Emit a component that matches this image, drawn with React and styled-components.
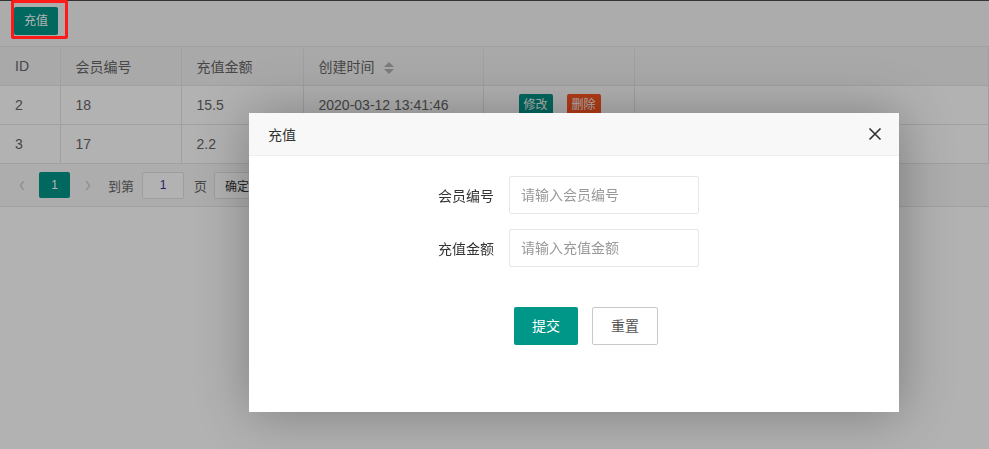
import React from 'react';
import styled, { createGlobalStyle } from 'styled-components';

const GlobalStyle = createGlobalStyle`
    html, body{
        margin: 0;
        padding: 0;
        background: #fff;
    }
    body{
        font-family: "Liberation Sans", "Noto Sans CJK SC", sans-serif;
        font-size: 14px;
        color: #666;
    }
`;

const Page = styled.div`
    width: 989px;
    min-height: 449px;
    border-top: 1px solid #4a4a4a;
    box-sizing: border-box;
`;

const Toolbar = styled.div`
    height: 46px;
    padding: 6px 14px 0;
    box-sizing: border-box;
    background: #f6f6f6;
    border-bottom: 1px solid #e6e6e6;
`;

const Btn = styled.button`
    height: ${p => p.h || 28}px;
    padding: 0 ${p => p.px || 10}px;
    border: ${p => p.plain ? '1px solid #c9c9c9' : 'none'};
    border-radius: 2px;
    background: ${p => p.plain ? '#fff' : p.danger ? '#ff5722' : '#009688'};
    color: ${p => p.plain ? '#555' : '#fff'};
    font-family: inherit;
    font-size: ${p => p.fs || 12}px;
    line-height: 1;
    cursor: pointer;
`;

const Table = styled.table`
    width: 100%;
    border-collapse: collapse;
    table-layout: fixed;
    th, td{
        height: 38px;
        padding: 0 15px;
        border-right: 1px solid #e6e6e6;
        border-bottom: 1px solid #e6e6e6;
        text-align: left;
        font-weight: normal;
        white-space: nowrap;
    }
    th{
        background: #f2f2f2;
    }
    td{
        background: #fff;
    }
`;

const SortIcon = styled.span`
    display: inline-flex;
    flex-direction: column;
    gap: 2px;
    margin-left: 9px;
    vertical-align: middle;
    i{
        width: 0;
        height: 0;
        border-left: 5px solid transparent;
        border-right: 5px solid transparent;
    }
    i:first-child{ border-bottom: 5px solid #b2b2b2; }
    i:last-child{ border-top: 5px solid #b2b2b2; }
`;

const Actions = styled.div`
    display: flex;
    gap: 14px;
    padding-left: 20px;
`;

const Pager = styled.div`
    display: flex;
    align-items: center;
    height: 42px;
    padding: 0 10px;
    background: #f8f8f8;
    border-bottom: 1px solid #e6e6e6;
    color: #666;
    font-size: 13px;
`;

const PageArrow = styled.span`
    width: 24px;
    text-align: center;
    color: #cfcfcf;
    font-size: 22px;
    line-height: 1;
    transform: scaleX(0.8);
`;

const PageNum = styled.span`
    display: inline-flex;
    align-items: center;
    justify-content: center;
    width: 31px;
    height: 26px;
    margin: 0 6px 0 5px;
    border-radius: 2px;
    background: #009688;
    color: #fff;
    font-size: 12px;
`;

const PageText = styled.span`
    margin-left: ${p => p.ml || 0}px;
`;

const PageInput = styled.span`
    display: inline-flex;
    align-items: center;
    justify-content: center;
    width: 40px;
    height: 25px;
    margin: 0 10px 0 8px;
    border: 1px solid #e2e2e2;
    border-radius: 2px;
    background: #fff;
    color: #333399;
    font-size: 12px;
`;

const PageGo = styled.span`
    display: inline-flex;
    align-items: center;
    height: 25px;
    padding: 0 10px;
    margin-left: 7px;
    border: 1px solid #e2e2e2;
    border-radius: 2px;
    background: #fff;
    color: #333;
    font-size: 12px;
`;

const Shade = styled.div`
    position: fixed;
    inset: 0;
    background: rgba(0, 0, 0, 0.3);
    z-index: 10;
`;

const Mark = styled.div`
    position: absolute;
    left: 11px;
    top: 0;
    width: 57px;
    height: 39px;
    border: 3px solid #ff1a1a;
    box-sizing: border-box;
    border-radius: 2px;
    z-index: 11;
`;

const Layer = styled.div`
    position: absolute;
    left: 249px;
    top: 113px;
    width: 650px;
    height: 299px;
    background: #fff;
    box-shadow: 1px 1px 50px rgba(0, 0, 0, 0.3);
    z-index: 12;
    color: #333;
`;

const LayerTitle = styled.div`
    display: flex;
    align-items: center;
    justify-content: space-between;
    height: 42px;
    padding: 0 17px 0 19px;
    background: #f8f8f8;
    border-bottom: 1px solid #eee;
    font-size: 14px;
`;

const CloseIcon = styled.svg`
    width: 14px;
    height: 14px;
    stroke: #2f2f2f;
    stroke-width: 1.6;
`;

const Form = styled.div`
    display: flex;
    flex-direction: column;
    gap: 15px;
    padding: 20px 0 0 0;
`;

const FormRow = styled.div`
    display: flex;
    align-items: center;
`;

const Label = styled.label`
    width: 260px;
    padding-right: 15px;
    box-sizing: border-box;
    text-align: right;
    color: #333;
    font-size: 14px;
`;

const Input = styled.input`
    width: 190px;
    height: 38px;
    padding: 0 11px;
    box-sizing: border-box;
    border: 1px solid #e6e6e6;
    border-radius: 2px;
    font-family: inherit;
    font-size: 14px;
    color: #333;
    outline: none;
    &::placeholder{
        color: #999;
    }
`;

const ButtonRow = styled.div`
    display: flex;
    gap: 14px;
    padding: 40px 0 0 265px;
`;

const rows = [
    { id: 2, member: 18, amount: '15.5', time: '2020-03-12 13:41:46' },
    { id: 3, member: 17, amount: '2.2', time: '2020-03-12 13:52:08' },
];

const App = () => {
    return (
        <>
            <GlobalStyle />
            <Page>
                <Toolbar>
                    <Btn>充值</Btn>
                </Toolbar>
                <Table>
                    <colgroup>
                        <col style={{ width: 60 }} />
                        <col style={{ width: 121 }} />
                        <col style={{ width: 122 }} />
                        <col style={{ width: 180 }} />
                        <col style={{ width: 151 }} />
                        <col />
                    </colgroup>
                    <thead>
                        <tr>
                            <th>ID</th>
                            <th>会员编号</th>
                            <th>充值金额</th>
                            <th>创建时间<SortIcon><i /><i /></SortIcon></th>
                            <th></th>
                            <th></th>
                        </tr>
                    </thead>
                    <tbody>
                        {rows.map(r => (
                            <tr key={r.id}>
                                <td>{r.id}</td>
                                <td>{r.member}</td>
                                <td>{r.amount}</td>
                                <td>{r.time}</td>
                                <td>
                                    <Actions>
                                        <Btn h={22} px={5}>修改</Btn>
                                        <Btn h={22} px={5} danger>删除</Btn>
                                    </Actions>
                                </td>
                                <td></td>
                            </tr>
                        ))}
                    </tbody>
                </Table>
                <Pager>
                    <PageArrow>‹</PageArrow>
                    <PageNum>1</PageNum>
                    <PageArrow>›</PageArrow>
                    <PageText ml={8}>到第</PageText>
                    <PageInput>1</PageInput>
                    <PageText>页</PageText>
                    <PageGo>确定</PageGo>
                    <PageText ml={10}>共 2 条</PageText>
                </Pager>
            </Page>
            <Shade />
            <Mark />
            <Layer>
                <LayerTitle>
                    <span>充值</span>
                    <CloseIcon viewBox="0 0 14 14" fill="none">
                        <path d="M1.5 1.5 L12.5 12.5 M12.5 1.5 L1.5 12.5" />
                    </CloseIcon>
                </LayerTitle>
                <Form>
                    <FormRow>
                        <Label>会员编号</Label>
                        <Input placeholder="请输入会员编号" />
                    </FormRow>
                    <FormRow>
                        <Label>充值金额</Label>
                        <Input placeholder="请输入充值金额" />
                    </FormRow>
                </Form>
                <ButtonRow>
                    <Btn h={38} px={18} fs={14}>提交</Btn>
                    <Btn h={38} px={18} fs={14} plain>重置</Btn>
                </ButtonRow>
            </Layer>
        </>
    );
};

export default App;
